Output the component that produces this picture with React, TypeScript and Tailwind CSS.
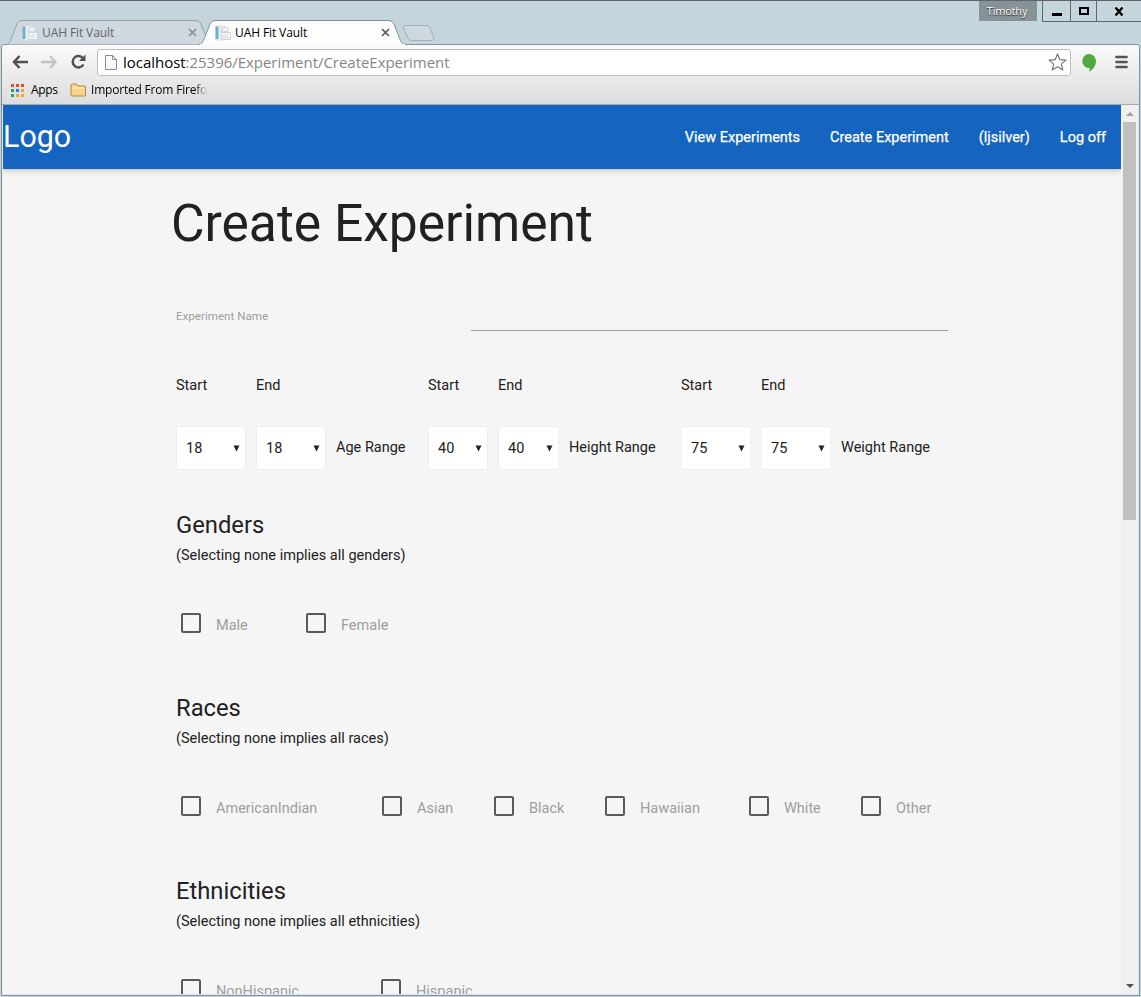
import React from "react";

function Favicon() {
  return (
    <svg width="16" height="16" viewBox="0 0 16 16" className="shrink-0">
      <rect x="1" y="1" width="9" height="14" fill="#edf1f3" stroke="#d9dfe2" strokeWidth="1" />
      <rect x="0.5" y="1.500" width="3" height="12.500" fill="#6fb0d8" />
      <path d="M5 4h5M5 6.500h4" stroke="#cbd5da" />
      <path d="M7.500 2.500h5.500v4h-5.500z" fill="#f1f4f6" stroke="#d3dade" />
      <path d="M6.500 7.500h9v7h-9z" fill="#f5f6f7" stroke="#cdd4d8" />
      <path d="M8 10.500h5M8 12.500h5" stroke="#d3dade" />
    </svg>
  );
}

function Tab({ active }: { active: boolean }) {
  return (
    <div className={active ? "relative z-10 -ml-[15px] h-[25px] w-[208px]" : "relative h-[25px] w-[208px]"}>
      <svg width="208" height="25" viewBox="0 0 208 25" className="absolute inset-0 overflow-visible">
        <path
          d="M1 24.5C4 24 5 22 6.500 18L12 4Q13.500 .5 17 .5H191Q194.500 .5 196 4L201.500 18C203 22 204 24.500 208 24.500"
          fill={active ? "#fdfdfd" : "#d0d8df"}
          stroke={active ? "#7f9095" : "#93a1a8"}
        />
        {active && <path d="M2 25H207" stroke="#fafafa" strokeWidth="2" />}
      </svg>
      <div className="relative flex h-[25px] items-center pl-[17px]">
        <Favicon />
        <span className={active ? "ml-1 w-[146px] text-[12px] tracking-[-0.1px] text-black" : "ml-1 w-[146px] text-[12px] tracking-[-0.1px] text-[#60656a]"}>
          UAH Fit Vault
        </span>
        <svg width="9" height="9" viewBox="0 0 9 9">
          <path d="M1 1l7 7M8 1l-7 7" stroke={active ? "#5a5a5a" : "#888f93"} strokeWidth="1.7" />
        </svg>
      </div>
    </div>
  );
}

function TitleBar() {
  return (
    <header className="flex h-[44px] shrink-0 items-start border-t border-[#62646d]">
      <div className="flex pl-[5px] pt-[19px]">
        <Tab active={false} />
        <Tab active />
        <svg width="34" height="19" viewBox="0 0 34 19" className="mt-[4px] -ml-[5px]">
          <path d="M4 1.500H26Q28 1.500 29 4L32.500 13Q33.500 16.500 31 16.500H11Q8 16.500 7 14L2.500 4Q2 1.500 4 1.500Z" fill="#ced8df" stroke="#a3b0b7" />
        </svg>
      </div>
      <div className="ml-auto flex h-5 w-[58px] items-center justify-center bg-[#869297] pr-[2px] text-[11px] tracking-[-0.2px] text-white [text-shadow:0_1px_1px_#222]">
        Timothy
      </div>
      <div className="ml-[5px] flex h-[21px] w-[99px] border-b border-l border-[#5f6670]">
        <div className="flex w-7 items-center justify-center border-r border-[#5f6670]">
          <svg width="10" height="10" viewBox="0 0 10 10"><path d="M0 8.500h10" stroke="#000" strokeWidth="3" /></svg>
        </div>
        <div className="flex w-[26px] items-center justify-center border-r border-[#5f6670]">
          <svg width="10" height="8" viewBox="0 0 10 8"><rect x="1" y="1" width="8" height="6" fill="none" stroke="#000" strokeWidth="2" /></svg>
        </div>
        <div className="flex flex-1 items-center justify-center">
          <svg width="10" height="9" viewBox="0 0 10 9"><path d="M1.500 .5l7 8M8.500 .5l-7 8" stroke="#000" strokeWidth="2.300" /></svg>
        </div>
      </div>
    </header>
  );
}

const appDots = [
  "#ea4335", "#ea4335", "#ea4335",
  "#2da160", "#2b7de9", "#f5a623",
  "#2da160", "#f5a623", "#f5a623",
];

function Toolbar() {
  return (
    <div className="flex h-[61px] shrink-0 flex-col rounded-t-[3px] border-b border-t border-b-[#a9a9a9] border-t-[#84949a] bg-linear-to-b from-[#fafafa] to-[#dddddd]">
      <div className="flex h-[34px] items-center pl-[10px]">
        <svg width="17" height="14" viewBox="0 0 17 14">
          <path d="M7.500 1L2 7l5.500 6M2 7h14" fill="none" stroke="#505050" strokeWidth="2.500" />
        </svg>
        <svg width="17" height="14" viewBox="0 0 17 14" className="ml-[12px]">
          <path d="M9 1l5.500 6L9 13M14.500 7H0" fill="none" stroke="#c2c2c2" strokeWidth="2.300" />
        </svg>
        <svg width="17" height="16" viewBox="0 0 17 16" className="ml-[12px]">
          <path d="M12.900 4.200A5.700 5.700 0 1 0 13.400 10.500" fill="none" stroke="#505050" strokeWidth="2.500" />
          <path d="M15.500 .5V7H9z" fill="#505050" />
        </svg>
        <div className="ml-[10px] flex h-[27px] w-[974px] items-center rounded-[3px] border border-[#bcbcbc] bg-white pl-[7px] pr-[3px]">
          <svg width="12" height="15" viewBox="0 0 12 15">
            <path d="M.5 .5h7l4 4v10H.5zM7.500 .5v4h4" fill="#f8f8f8" stroke="#8a8a8a" />
          </svg>
          <div className="ml-[6px] whitespace-nowrap font-['Open_Sans'] text-[15px] leading-5 tracking-[-0.03px] text-[#858585]">
            <span className="text-black">localhost</span>:25396/Experiment/CreateExperiment
          </div>
          <svg width="19" height="18" viewBox="0 0 19 18" className="ml-auto">
            <path d="M9.500 1l2.300 5.700 6.200.4-4.700 4 1.500 6-5.300-3.300-5.300 3.300 1.500-6-4.700-4 6.200-.4z" fill="#fff" stroke="#777" strokeWidth="1.200" strokeLinejoin="round" />
          </svg>
        </div>
        <svg width="14" height="18" viewBox="0 0 14 18" className="ml-[11px] mt-[2px]">
          <path d="M7 0a7 7 0 0 1 7 7c0 4.500-3 8.500-6.500 10.700V14A7 7 0 1 1 7 0z" fill="#53a93f" />
        </svg>
        <svg width="13" height="14" viewBox="0 0 13 14" className="ml-[19px]">
          <path d="M1.500 2h10M1.500 7h10M1.500 12h10" stroke="#555" strokeWidth="2.700" strokeLinecap="round" />
        </svg>
      </div>
      <div className="flex h-[22px] items-center pl-[9px] text-[12px] text-black">
        <div className="grid h-[13px] w-[13px] grid-cols-3 gap-[2px]">
          {appDots.map((c, i) => <i key={i} style={{ background: c }} />)}
        </div>
        <span className="ml-[7px] w-[38px] tracking-[-0.3px]">Apps</span>
        <svg width="17" height="14" viewBox="0 0 17 14" className="ml-px">
          <path d="M1 12V2Q1 1 2 1H6.500L8 3H14.500Q15.500 3 15.500 4V12Q15.500 13 14.500 13H2Q1 13 1 12Z" fill="#f9d28a" stroke="#b5873d" />
          <path d="M2 5H14.500" stroke="#fff0c9" />
        </svg>
        <span className="ml-[4px] w-[117px] overflow-hidden whitespace-nowrap tracking-[-0.2px] [mask-image:linear-gradient(to_right,black_88%,transparent)]">
          Imported From Firefox
        </span>
      </div>
    </div>
  );
}

function NavBar() {
  return (
    <nav className="relative flex h-16 shrink-0 items-center bg-[#1565c0] pr-[15px] text-white shadow-[0_2px_5px_0_rgba(0,0,0,0.2)]">
      <a className="text-[30.45px]">Logo</a>
      <div className="ml-auto flex gap-[30px] pt-px text-[14.5px] [-webkit-text-stroke:0.25px_white]">
        <a>View Experiments</a>
        <a>Create Experiment</a>
        <a>(ljsilver)</a>
        <a>Log off</a>
      </div>
    </nav>
  );
}

function RangeSelect({ label, value, box, cell }: { label: string; value: number; box: string; cell: string }) {
  return (
    <div className={cell}>
      <div className="h-[51px] leading-[22px]">{label}</div>
      <div className={`flex h-[44px] items-center justify-between rounded-[2px] border border-[#f0f0f0] bg-white pl-[9px] pr-[5px] ${box}`}>
        <span className="pt-px">{value}</span>
        <svg width="7" height="7" viewBox="0 0 7 7"><path d="M.5 .5h6L3.500 6.500z" fill="#212121" /></svg>
      </div>
    </div>
  );
}

function Check({ label, width }: { label: string; width: string }) {
  return (
    <label className={`flex items-start pl-[5px] ${width}`}>
      <span className="h-5 w-5 shrink-0 rounded-[2px] border-2 border-[#5a5a5a]" />
      <span className="ml-[15px] leading-[26px] text-[#9e9e9e]">{label}</span>
    </label>
  );
}

function Group({ title, hint, options }: { title: string; hint: string; options: [string, string][] }) {
  return (
    <section className="h-[183px] shrink-0">
      <h5 className="text-[23.78px] leading-[30px]">{title}</h5>
      <p className="mt-[5px] leading-[22px]">{hint}</p>
      <div className="mt-[46px] flex">
        {options.map(([label, width]) => <Check key={label} label={label} width={width} />)}
      </div>
    </section>
  );
}

function ExperimentForm() {
  return (
    <main className="flex min-h-0 flex-1 flex-col overflow-hidden pl-[173px] text-[14.5px] text-[#212121]">
      <h2 className="mt-[26px] -ml-[5px] h-[57px] text-[51.55px] leading-[57px]">Create Experiment</h2>
      <div className="mt-[37px] flex h-[42px] shrink-0">
        <label className="w-[295px] pt-[17px] text-[11.6px] leading-[20px] text-[#9e9e9e]">Experiment Name</label>
        <div className="w-[477px] border-b border-[#9e9e9e]" />
      </div>
      <div className="mt-[44px] flex h-[95px] shrink-0 whitespace-nowrap">
        <RangeSelect label="Start" value={18} box="w-[70px]" cell="w-20" />
        <RangeSelect label="End" value={18} box="w-[70px]" cell="w-20" />
        <span className="w-[92px] pt-[62px] leading-[22px]">Age Range</span>
        <RangeSelect label="Start" value={40} box="w-[60px]" cell="w-[70px]" />
        <RangeSelect label="End" value={40} box="w-[61px]" cell="w-[71px]" />
        <span className="w-[112px] pt-[62px] leading-[22px]">Height Range</span>
        <RangeSelect label="Start" value={75} box="w-[70px]" cell="w-20" />
        <RangeSelect label="End" value={75} box="w-[70px]" cell="w-20" />
        <span className="pt-[62px] leading-[22px]">Weight Range</span>
      </div>
      <div className="mt-[40px] flex flex-col">
        <Group title="Genders" hint="(Selecting none implies all genders)" options={[["Male", "w-[125px]"], ["Female", "w-[125px]"]]} />
        <Group
          title="Races"
          hint="(Selecting none implies all races)"
          options={[
            ["AmericanIndian", "w-[201px]"],
            ["Asian", "w-[112px]"],
            ["Black", "w-[111px]"],
            ["Hawaiian", "w-[144px]"],
            ["White", "w-[112px]"],
            ["Other", "w-[112px]"],
          ]}
        />
        <Group title="Ethnicities" hint="(Selecting none implies all ethnicities)" options={[["NonHispanic", "w-[200px]"], ["Hispanic", "w-[200px]"]]} />
      </div>
    </main>
  );
}

function ScrollBar() {
  return (
    <div className="flex w-[17px] shrink-0 flex-col items-center bg-[#f0f0f0]">
      <div className="flex h-[17px] items-center">
        <svg width="8" height="4" viewBox="0 0 8 4"><path d="M4 0l4 4H0z" fill="#a0a0a0" /></svg>
      </div>
      <div className="h-[398px] w-[13px] bg-[#c0c0c0]" />
      <div className="mt-auto flex h-[17px] items-center">
        <svg width="8" height="4" viewBox="0 0 8 4"><path d="M4 4l4-4H0z" fill="#505050" /></svg>
      </div>
    </div>
  );
}

export default function App() {
  return (
    <div className="flex h-[997px] w-[1141px] flex-col overflow-hidden bg-[#c4d6dc] font-['Open_Sans',sans-serif]">
      <TitleBar />
      <div className="mx-px mb-px flex min-h-0 flex-1 flex-col rounded-t-[4px] border border-t-0 border-[#819399] bg-[#e6e9ea]">
        <Toolbar />
        <div className="mx-px mb-px flex min-h-0 flex-1 font-[Roboto,sans-serif]">
          <div className="flex min-w-0 flex-1 flex-col overflow-hidden bg-[#f5f5f5]">
            <NavBar />
            <ExperimentForm />
          </div>
          <ScrollBar />
        </div>
      </div>
    </div>
  );
}
